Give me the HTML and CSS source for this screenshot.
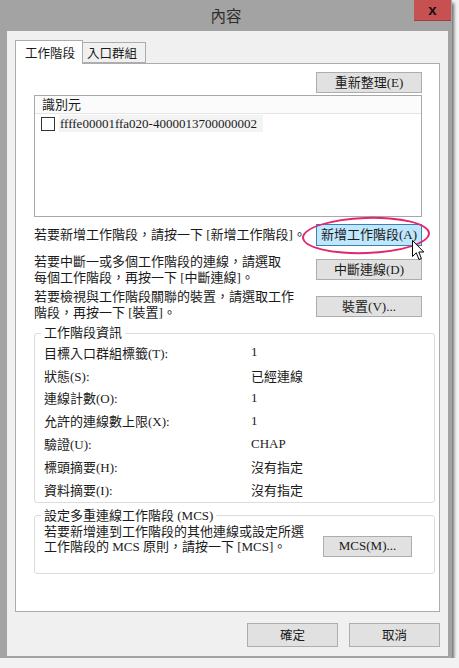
FILE: index.html
```html
<!DOCTYPE html>
<html lang="zh-Hant">
<head>
    <meta charset="UTF-8">
    <meta name="viewport" content="width=device-width, initial-scale=1.0">
    <title>內容</title>
    <link rel="stylesheet" href="styles.css">
</head>
<body>
    <div class="window">
        <!-- Title bar -->
        <div class="titlebar">
            <span class="title">內容</span>
            <button class="close">x</button>
        </div>

        <div class="client">
            <!-- Tabs -->
            <div class="tabs">
                <div class="tab active">工作階段</div>
                <div class="tab">入口群組</div>
            </div>

            <div class="panel">
                <div class="refresh-row">
                    <button class="btn">重新整理(E)</button>
                </div>

                <div class="listbox">
                    <div class="list-header">識別元</div>
                    <div class="list-item">
                        <span class="checkbox"></span>
                        <span class="item-text">ffffe00001ffa020-4000013700000002</span>
                    </div>
                </div>

                <div class="action-row row-add">
                    <p>若要新增工作階段，請按一下 [新增工作階段]。</p>
                    <div class="btn-wrap">
                        <button class="btn btn-hot">新增工作階段(A)</button>
                        <span class="ring"></span>
                        <svg class="cursor" width="13" height="21" viewBox="0 0 13 21">
                            <path d="M0.5 0.5 L0.5 16.5 L4.3 12.8 L7 19.5 L9.4 18.5 L6.8 12 L11.8 12 Z" fill="#fff" stroke="#000" stroke-width="1" stroke-linejoin="round"/>
                        </svg>
                    </div>
                </div>

                <div class="action-row row-disconnect">
                    <p>若要中斷一或多個工作階段的連線，請選取<br>每個工作階段，再按一下 [中斷連線]。</p>
                    <button class="btn">中斷連線(D)</button>
                </div>

                <div class="action-row row-devices">
                    <p>若要檢視與工作階段關聯的裝置，請選取工作<br>階段，再按一下 [裝置]。</p>
                    <button class="btn">裝置(V)...</button>
                </div>

                <!-- Session info -->
                <fieldset class="group info">
                    <legend>工作階段資訊</legend>
                    <div class="info-grid">
                        <span>目標入口群組標籤(T):</span><span>1</span>
                        <span>狀態(S):</span><span>已經連線</span>
                        <span>連線計數(O):</span><span>1</span>
                        <span>允許的連線數上限(X):</span><span>1</span>
                        <span>驗證(U):</span><span>CHAP</span>
                        <span>標頭摘要(H):</span><span>沒有指定</span>
                        <span>資料摘要(I):</span><span>沒有指定</span>
                    </div>
                </fieldset>

                <fieldset class="group mcs">
                    <legend>設定多重連線工作階段 (MCS)</legend>
                    <div class="mcs-row">
                        <p>若要新增連到工作階段的其他連線或設定所選<br>工作階段的 MCS 原則，請按一下 [MCS]。</p>
                        <button class="btn btn-mcs">MCS(M)...</button>
                    </div>
                </fieldset>
            </div>

            <div class="footer">
                <button class="btn btn-footer">確定</button>
                <button class="btn btn-footer">取消</button>
            </div>
        </div>
    </div>
</body>
</html>
```

FILE: styles.css
```css
/* Page */
body {
    margin: 0;
    background: #f2f2f2;
    font-family: "Liberation Serif", "Noto Sans CJK TC", serif;
    font-size: 13px;
    color: #1a1a1a;
}
button {
    font-family: inherit;
    font-size: 13px;
    color: #1a1a1a;
    padding: 0;
}
p {
    margin: 0;
}

/* Window frame */
.window {
    width: 452px;
    height: 658px;
    background: #a3a3a3;
    box-shadow: 2px 3px 3px rgba(0, 0, 0, 0.55);
    display: flex;
    flex-direction: column;
}
.titlebar {
    height: 31px;
    position: relative;
    display: flex;
    justify-content: center;
    align-items: center;
}
.titlebar .title {
    font-family: "Noto Sans CJK TC", sans-serif;
    font-size: 15.5px;
    color: #2e2e2e;
    margin-top: -1px;
}
.titlebar .close {
    position: absolute;
    top: 0;
    right: 1px;
    width: 37px;
    height: 21px;
    background: #c75050;
    border: none;
    border-bottom: 1px solid #9e3f3f;
    font-family: "Liberation Sans", sans-serif;
    font-weight: bold;
    font-size: 15px;
    line-height: 18px;
    color: #111;
}

/* Client area */
.client {
    margin: 0 4px 0 7px;
    height: 625px;
    background: #f0f0f0;
    padding: 9px 8px 9px 8px;
    box-sizing: border-box;
    display: flex;
    flex-direction: column;
}

/* Tabs */
.tabs {
    display: flex;
    align-items: flex-start;
    height: 24px;
    margin-bottom: -1px;
    position: relative;
    z-index: 1;
}
.tab {
    font-family: "Noto Sans CJK TC", sans-serif;
    font-size: 12.5px;
    border: 1px solid #acacac;
    border-bottom: none;
    box-sizing: border-box;
    line-height: 19px;
}
.tab.active {
    background: #fff;
    height: 24px;
    width: 68px;
    padding-left: 9px;
    padding-top: 2px;
}
.tab:not(.active) {
    background: #f0f0f0;
    height: 21px;
    width: 64px;
    margin-top: 2px;
    margin-left: -1px;
    padding-left: 4px;
    border-bottom: 1px solid #acacac;
}

/* Tab panel */
.panel {
    flex: 1;
    background: #fff;
    border: 1px solid #acacac;
    padding: 8px 4px 0 18px;
    display: flex;
    flex-direction: column;
}

/* Buttons */
.btn {
    width: 106px;
    height: 21px;
    background: #e1e1e1;
    border: 1px solid #adadad;
    line-height: 18px;
}
.btn-hot {
    background: #bee6fd;
    border-color: #3c7fb1;
    height: 22px;
}
.refresh-row {
    display: flex;
    justify-content: flex-end;
    margin-right: 13px;
}

/* List of identifiers */
.listbox {
    margin: 2px 13px 0 0;
    height: 122px;
    border: 1px solid #a8a8a8;
    box-sizing: border-box;
}
.list-header {
    height: 17px;
    line-height: 17px;
    padding-left: 7px;
    background: #fbfbfb;
    border-bottom: 1px solid #e5e5e5;
}
.list-item {
    display: flex;
    align-items: center;
    height: 17px;
    margin-top: 1px;
    padding-left: 6px;
}
.checkbox {
    width: 12px;
    height: 12px;
    border: 1px solid #333;
    background: #fff;
    margin-right: 4px;
}
.item-text {
    background: #f3f3f3;
    padding: 0 6px 0 1px;
    line-height: 17px;
}

/* Text + button rows */
.action-row {
    display: flex;
    justify-content: space-between;
    align-items: flex-start;
    margin-right: 13px;
}
.action-row p {
    line-height: 16px;
}
.row-add {
    position: relative;
    margin-top: 7px;
    align-items: center;
    height: 22px;
}
.row-disconnect {
    margin-top: 8px;
}
.row-disconnect .btn {
    margin-top: 5px;
}
.row-devices {
    margin-top: 3px;
}
.row-devices .btn {
    margin-top: 7px;
}

/* Highlight ring and pointer */
.btn-wrap {
    position: relative;
    height: 22px;
}
.ring {
    position: absolute;
    left: -14px;
    top: -7px;
    width: 124px;
    height: 33px;
    border: 2px solid #e1266f;
    border-radius: 50%;
    transform: rotate(-2deg);
}
.cursor {
    position: absolute;
    left: 96px;
    top: 16px;
}

/* Group boxes */
.group {
    margin: 0;
    border: 1px solid #dcdcdc;
    border-radius: 3px;
    padding: 0 0 0 9px;
}
.group legend {
    padding: 0 3px;
    margin-left: -3px;
    line-height: 16px;
}
.info {
    margin-top: 4px;
    padding-bottom: 1px;
}
.info-grid {
    display: grid;
    grid-template-columns: 207px 1fr;
    grid-auto-rows: 22.8px;
    align-items: center;
}
.mcs {
    margin-top: 5px;
    padding-bottom: 16px;
}
.mcs-row {
    display: flex;
    align-items: flex-start;
    justify-content: space-between;
    padding-right: 22px;
}
.mcs-row p {
    line-height: 15px;
}
.btn-mcs {
    width: 89px;
    margin-top: 12px;
}

/* Dialog buttons */
.footer {
    display: flex;
    justify-content: flex-end;
    gap: 11px;
    margin-top: 11px;
}
.btn-footer {
    width: 91px;
    height: 24px;
    font-family: "Noto Sans CJK TC", sans-serif;
    font-size: 12.5px;
}
```
